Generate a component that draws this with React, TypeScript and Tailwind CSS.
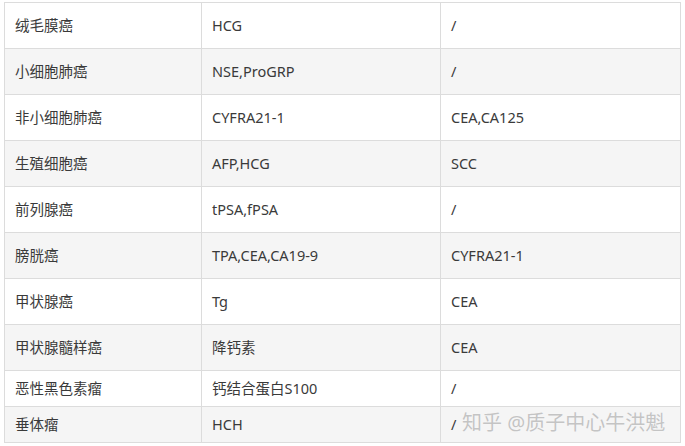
import React from "react";

const rows: [string, string, string][] = [
  ["绒毛膜癌", "HCG", "/"],
  ["小细胞肺癌", "NSE,ProGRP", "/"],
  ["非小细胞肺癌", "CYFRA21-1", "CEA,CA125"],
  ["生殖细胞癌", "AFP,HCG", "SCC"],
  ["前列腺癌", "tPSA,fPSA", "/"],
  ["膀胱癌", "TPA,CEA,CA19-9", "CYFRA21-1"],
  ["甲状腺癌", "Tg", "CEA"],
  ["甲状腺髓样癌", "降钙素", "CEA"],
  ["恶性黑色素瘤", "钙结合蛋白S100", "/"],
  ["垂体瘤", "HCH", "/"],
];

export default function App() {
  return (
    <div
      className="relative w-[685px] h-[446px] bg-white overflow-hidden"
      style={{ fontFamily: '"Noto Sans", "Noto Sans CJK SC", sans-serif' }}
    >
      <div className="ml-[4px] mt-[2px] w-[677px] border-t border-l border-[#dcdcdc] text-[14.5px] text-[#3a3a3a]">
        {rows.map((r, i) => {
          const bg = i % 2 === 1 ? "bg-[#f5f5f5]" : "bg-white";
          const h = i >= 8 ? "h-[36px]" : "h-[46px]";
          return (
            <div key={i} className={`grid grid-cols-[197px_239px_240px] ${bg} ${h}`}>
              <div className="flex items-center pl-[10px] border-r border-b border-[#dcdcdc]">{r[0]}</div>
              <div className="flex items-center pl-[10px] border-r border-b border-[#dcdcdc]">{r[1]}</div>
              <div className="flex items-center pl-[10px] border-r border-b border-[#dcdcdc]">{r[2]}</div>
            </div>
          );
        })}
      </div>
      <div
        className="absolute left-[462px] top-[409px] text-[20px] leading-[28px] text-[#c4c4c4] whitespace-nowrap"
        style={{ textShadow: "0 0 1px #ffffff" }}
      >
        知乎 @质子中心牛洪魁
      </div>
    </div>
  );
}
